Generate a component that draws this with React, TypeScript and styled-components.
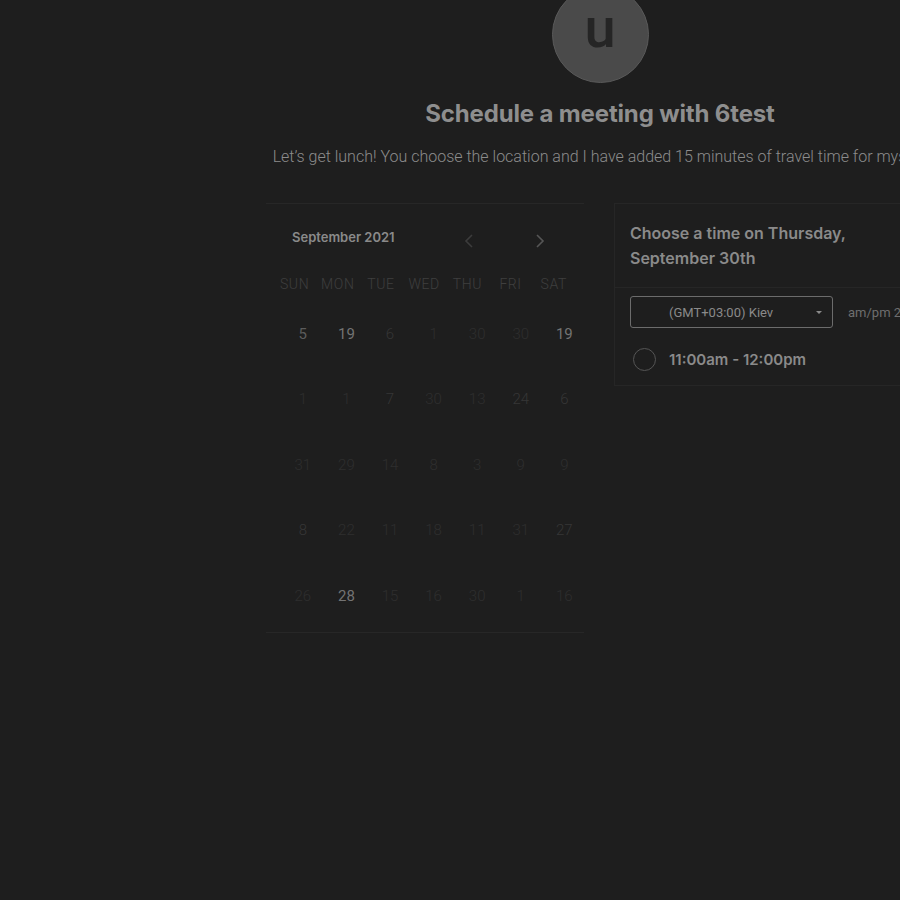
import React from "react";
import styled, { createGlobalStyle } from "styled-components";

const Global = createGlobalStyle`
  html, body { margin: 0; padding: 0; background: #1e1e1e; overflow: hidden; }
  body { font-family: "Inter", "Roboto", sans-serif; }
`;

const Page = styled.div`
  width: 1200px;
  min-height: 900px;
  background: #1e1e1e;
  display: flex;
  flex-direction: column;
  align-items: center;
`;

const Avatar = styled.div`
  margin-top: -14px;
  width: 97px;
  height: 97px;
  box-sizing: border-box;
  border-radius: 50%;
  background: #4a4a4a;
  border: 1px solid #595959;
  display: flex;
  align-items: center;
  justify-content: center;
  font-family: "Roboto", sans-serif;
  font-weight: 500;
  font-size: 56px;
  line-height: 1;
  color: #252525;
  padding-bottom: 14px;
`;

const Title = styled.h1`
  margin: 16px 0 0;
  font-family: "Inter", sans-serif;
  font-weight: 700;
  font-size: 24px;
  line-height: 30px;
  color: #8e8e8e;
  letter-spacing: -0.15px;
`;

const Subtitle = styled.p`
  margin: 18px 0 0;
  font-family: "Roboto", sans-serif;
  font-weight: 300;
  font-size: 16px;
  line-height: 20px;
  color: #8c8c8c;
  white-space: nowrap;
`;

const Panels = styled.div`
  margin-top: 36px;
  width: 668px;
  display: flex;
  gap: 30px;
  align-items: flex-start;
`;

const CalendarPanel = styled.div`
  width: 318px;
  border-top: 1px solid #272727;
  border-bottom: 1px solid #272727;
  padding-bottom: 3px;
`;

const MonthBar = styled.div`
  display: flex;
  align-items: center;
  height: 66px;
  padding-left: 26px;
`;

const MonthLabel = styled.div`
  font-family: "Inter", sans-serif;
  font-weight: 600;
  font-size: 13px;
  color: #8a8a8a;
  width: 141px;
`;

const NavBtn = styled.div<{ $color: string }>`
  width: 71px;
  display: flex;
  justify-content: center;
  padding-top: 7px;
  color: ${(p) => p.$color};
`;

const WeekRow = styled.div`
  display: grid;
  grid-template-columns: repeat(7, 43.2px);
  padding-left: 7px;
  margin-top: 3px;
  height: 22px;
  align-items: center;
`;

const WeekDay = styled.div`
  text-align: center;
  font-family: "Roboto", sans-serif;
  font-weight: 300;
  font-size: 14px;
  letter-spacing: 0.6px;
  color: #3f3f3f;
`;

const DaysGrid = styled.div`
  display: grid;
  grid-template-columns: repeat(7, 43.6px);
  grid-auto-rows: 65.5px;
  padding-left: 15px;
  margin-top: 6px;
`;

const levels: Record<string, string> = {
  b: "#737373",
  m: "#5c5c5c",
  d: "#363636",
  f: "#2e2e2e",
};

const Day = styled.div<{ $level: string }>`
  display: flex;
  align-items: center;
  justify-content: center;
  font-family: "Roboto", sans-serif;
  font-weight: ${(p) => (p.$level === "b" || p.$level === "m" ? 400 : 300)};
  font-size: 15px;
  color: ${(p) => levels[p.$level]};
`;

const TimePanel = styled.div`
  flex: 1;
  border-top: 1px solid #262626;
  border-left: 1px solid #262626;
  border-bottom: 1px solid #262626;
`;

const TimeHeader = styled.div`
  padding: 17px 16px 16px 15px;
  border-bottom: 1px solid #262626;
  font-family: "Inter", sans-serif;
  font-weight: 600;
  font-size: 16px;
  line-height: 25px;
  color: #8a8a8a;
`;

const Controls = styled.div`
  display: flex;
  align-items: center;
  padding: 8px 0 0 15px;
  gap: 15px;
`;

const Select = styled.div`
  width: 203px;
  height: 32px;
  box-sizing: border-box;
  border: 1px solid #6c6c6c;
  border-radius: 3px;
  display: flex;
  align-items: center;
  padding: 0 10px 0 38px;
  font-family: "Roboto", sans-serif;
  font-size: 13px;
  color: #8a8a8a;
`;

const Caret = styled.span`
  margin-left: auto;
  width: 0;
  height: 0;
  border-left: 3.5px solid transparent;
  border-right: 3.5px solid transparent;
  border-top: 3.5px solid #8a8a8a;
`;

const Toggle = styled.div`
  font-family: "Roboto", sans-serif;
  font-size: 13px;
  color: #6e6e6e;
  white-space: nowrap;
`;

const Slot = styled.div`
  display: flex;
  align-items: center;
  gap: 13px;
  padding: 20px 16px 14px 18px;
`;

const Radio = styled.div`
  width: 23px;
  height: 23px;
  box-sizing: border-box;
  border-radius: 50%;
  border: 1.5px solid #555;
`;

const SlotLabel = styled.div`
  font-family: "Inter", sans-serif;
  font-weight: 600;
  font-size: 15px;
  color: #8a8a8a;
`;

const weekdays = ["SUN", "MON", "TUE", "WED", "THU", "FRI", "SAT"];

const days: [string, string][] = [
  ["5", "m"], ["19", "b"], ["6", "d"], ["1", "f"], ["30", "f"], ["30", "f"], ["19", "b"],
  ["1", "f"], ["1", "f"], ["7", "d"], ["30", "f"], ["13", "f"], ["24", "d"], ["6", "d"],
  ["31", "f"], ["29", "f"], ["14", "f"], ["8", "f"], ["3", "f"], ["9", "f"], ["9", "f"],
  ["8", "d"], ["22", "f"], ["11", "f"], ["18", "f"], ["11", "f"], ["31", "f"], ["27", "d"],
  ["26", "f"], ["28", "b"], ["15", "f"], ["16", "f"], ["30", "f"], ["1", "f"], ["16", "f"],
];

const Chevron = ({ dir }: { dir: "l" | "r" }) => (
  <svg width="10" height="16" viewBox="0 0 10 16" fill="none">
    <path
      d={dir === "l" ? "M8 2 L2 8 L8 14" : "M2 2 L8 8 L2 14"}
      stroke="currentColor"
      strokeWidth="1.6"
    />
  </svg>
);

export default function App() {
  return (
    <>
      <Global />
      <Page>
        <Avatar>u</Avatar>
        <Title>Schedule a meeting with 6test</Title>
        <Subtitle>
          Let’s get lunch! You choose the location and I have added 15 minutes of travel time for myself.
        </Subtitle>
        <Panels>
          <CalendarPanel>
            <MonthBar>
              <MonthLabel>September 2021</MonthLabel>
              <NavBtn $color="#3c3c3c">
                <Chevron dir="l" />
              </NavBtn>
              <NavBtn $color="#565656">
                <Chevron dir="r" />
              </NavBtn>
            </MonthBar>
            <WeekRow>
              {weekdays.map((w) => (
                <WeekDay key={w}>{w}</WeekDay>
              ))}
            </WeekRow>
            <DaysGrid>
              {days.map(([n, l], i) => (
                <Day key={i} $level={l}>
                  {n}
                </Day>
              ))}
            </DaysGrid>
          </CalendarPanel>
          <TimePanel>
            <TimeHeader>
              Choose a time on Thursday,
              <br />
              September 30th
            </TimeHeader>
            <Controls>
              <Select>
                (GMT+03:00) Kiev
                <Caret />
              </Select>
              <Toggle>am/pm 24h</Toggle>
            </Controls>
            <Slot>
              <Radio />
              <SlotLabel>11:00am - 12:00pm</SlotLabel>
            </Slot>
          </TimePanel>
        </Panels>
      </Page>
    </>
  );
}
